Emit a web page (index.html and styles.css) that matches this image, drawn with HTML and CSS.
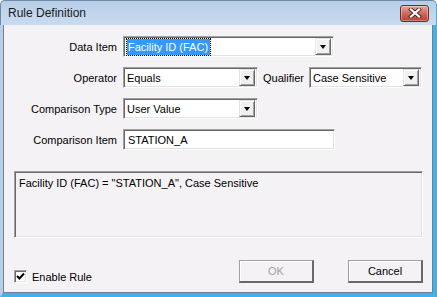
FILE: index.html
```html
<!DOCTYPE html>
<html lang="en">

<head>
    <meta charset="UTF-8">
    <title>Rule Definition</title>
    <link rel="stylesheet" href="styles.css">
</head>

<body>
    <div class="window">
        <div class="titlebar">
            <span class="title">Rule Definition</span>
            <div class="close-btn">
                <svg width="14" height="10" viewBox="0 0 14 10">
                    <path d="M3 1.5 L11 8.5 M11 1.5 L3 8.5" stroke="#4a2a2a" stroke-width="4" stroke-linecap="square" />
                    <path d="M3 1.5 L11 8.5 M11 1.5 L3 8.5" stroke="#ffffff" stroke-width="2.2" stroke-linecap="square" />
                </svg>
            </div>
        </div>

        <div class="client">
            <div class="panel">
                <div class="form-rows">
                    <div class="form-row">
                        <span class="form-label">Data Item</span>
                        <div class="combo combo-data">
                            <span class="combo-value selected">Facility ID (FAC)</span>
                            <span class="drop-btn"><span class="tri"></span></span>
                        </div>
                    </div>
                    <div class="form-row">
                        <span class="form-label">Operator</span>
                        <div class="combo combo-short">
                            <span class="combo-value">Equals</span>
                            <span class="drop-btn"><span class="tri"></span></span>
                        </div>
                        <span class="qual-label">Qualifier</span>
                        <div class="combo combo-qual">
                            <span class="combo-value">Case Sensitive</span>
                            <span class="drop-btn"><span class="tri"></span></span>
                        </div>
                    </div>
                    <div class="form-row">
                        <span class="form-label">Comparison Type</span>
                        <div class="combo combo-short">
                            <span class="combo-value">User Value</span>
                            <span class="drop-btn"><span class="tri"></span></span>
                        </div>
                    </div>
                    <div class="form-row">
                        <span class="form-label">Comparison Item</span>
                        <div class="textbox">STATION_A</div>
                    </div>
                </div>

                <div class="summary">Facility ID (FAC) = "STATION_A", Case Sensitive</div>

                <div class="footer">
                    <label class="check">
                        <span class="check-box">
                            <svg width="9" height="9" viewBox="0 0 9 9">
                                <path d="M1 4 L3.5 6.5 L8 1.5" fill="none" stroke="#000" stroke-width="2" />
                            </svg>
                        </span>
                        Enable Rule
                    </label>
                    <div class="buttons">
                        <div class="btn btn-disabled">OK</div>
                        <div class="btn">Cancel</div>
                    </div>
                </div>
            </div>
        </div>
    </div>
</body>

</html>
```

FILE: styles.css
```css
body {
    margin: 0;
    background-color: #f5f2f5;
    font-family: "Liberation Sans", Arial, sans-serif;
    font-size: 11px;
    color: #000;
}

.window {
    width: 437px;
    height: 297px;
    display: flex;
    flex-direction: column;
    background-color: #f5f2f5;
}

.titlebar {
    height: 25px;
    flex: none;
    display: flex;
    align-items: center;
    justify-content: space-between;
    padding: 0 7px 0 7px;
    background: linear-gradient(#b8cee8, #c9dbf0);
    border-left: 1px solid #6f8aa6;
    border-top: 1px solid #6f8aa6;
    border-right: 1px solid #3db3e6;
    border-top-left-radius: 5px;
    border-top-right-radius: 5px;
    box-sizing: border-box;
}

.title {
    font-size: 12px;
    color: #1a1a1a;
}

.close-btn {
    width: 27px;
    height: 15px;
    display: flex;
    align-items: center;
    justify-content: center;
    background: linear-gradient(#e3a79e, #cf6a5c 50%, #bb3f30);
    border: 1px solid #6d2b25;
    border-radius: 3px;
    box-shadow: inset 0 0 0 1px rgba(255, 255, 255, 0.35);
}

.client {
    flex: 1;
    display: flex;
    border-style: solid;
    border-width: 0 4px 4px 3px;
    border-color: #3db3e6;
    border-left-color: #b8cee8;
}

.panel {
    flex: 1;
    border: 1px solid #6f8193;
    border-top: none;
    padding: 11px 9px 0 10px;
}

.form-rows {
    display: flex;
    flex-direction: column;
    gap: 10px;
}

.form-row {
    display: flex;
    align-items: center;
    height: 21px;
}

.form-label {
    width: 103px;
    text-align: right;
    margin-right: 6px;
}

.qual-label {
    margin: 0 5px 0 5px;
}

.combo,
.textbox {
    height: 21px;
    box-sizing: border-box;
    display: flex;
    align-items: center;
    background-color: #fff;
    border: 1px solid;
    border-color: #a0a0a0 #ffffff #ffffff #a0a0a0;
    box-shadow: inset 1px 1px 0 #696969, inset -1px -1px 0 #e3e3e3;
    padding: 2px;
}

.combo-data {
    width: 211px;
}

.combo-short {
    width: 135px;
}

.combo-qual {
    width: 113px;
}

.textbox {
    width: 212px;
    padding-left: 4px;
}

.combo-value {
    flex: 1;
    padding-left: 1px;
}

.combo-value.selected {
    flex: none;
    color: #fff;
    background-color: #3399ff;
    outline: 1px dotted #000;
    padding: 2px 2px 2px 1px;
    margin-left: 1px;
}

.selected + .drop-btn {
    margin-left: auto;
}

.drop-btn {
    width: 16px;
    height: 17px;
    box-sizing: border-box;
    display: flex;
    align-items: center;
    justify-content: center;
    background-color: #f0f0f0;
    border: 1px solid;
    border-color: #e3e3e3 #696969 #696969 #e3e3e3;
    box-shadow: inset 1px 1px 0 #fff, inset -1px -1px 0 #a0a0a0;
}

.tri {
    width: 0;
    height: 0;
    border-left: 3.5px solid transparent;
    border-right: 3.5px solid transparent;
    border-top: 4px solid #000;
    margin-top: 1px;
}

.summary {
    margin-top: 21px;
    width: 409px;
    height: 67px;
    box-sizing: border-box;
    padding: 5px 4px;
    border: 1px solid;
    border-color: #a0a0a0 #ffffff #ffffff #a0a0a0;
    box-shadow: inset 1px 1px 0 #696969, inset -1px -1px 0 #e3e3e3;
}

.footer {
    margin-top: 22px;
    width: 409px;
    display: flex;
    align-items: flex-end;
    justify-content: space-between;
}

.check {
    display: flex;
    align-items: center;
    gap: 5px;
    margin-bottom: 0;
}

.check-box {
    width: 13px;
    height: 13px;
    box-sizing: border-box;
    display: flex;
    align-items: center;
    justify-content: center;
    background-color: #fff;
    border: 1px solid;
    border-color: #a0a0a0 #ffffff #ffffff #a0a0a0;
    box-shadow: inset 1px 1px 0 #696969, inset -1px -1px 0 #e3e3e3;
}

.buttons {
    display: flex;
    gap: 34px;
}

.btn {
    width: 75px;
    height: 23px;
    box-sizing: border-box;
    display: flex;
    align-items: center;
    justify-content: center;
    background-color: #f5f2f5;
    border-style: solid;
    border-width: 1px 2px 2px 1px;
    border-color: #a0a0a0 #696969 #696969 #a0a0a0;
    box-shadow: inset 1px 1px 0 #ffffff;
}

.btn-disabled {
    color: #a0a0a0;
}
```
